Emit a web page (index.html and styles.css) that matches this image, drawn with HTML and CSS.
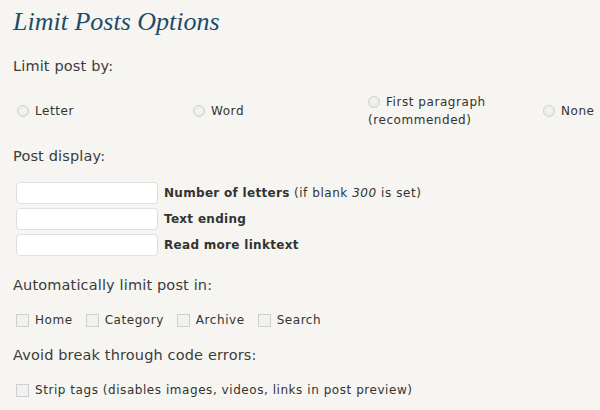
FILE: index.html
```html
<!DOCTYPE html>
<html>
<head>
<meta charset="utf-8">
<link rel="stylesheet" href="styles.css">
</head>
<body>
<div class="wrap">
  <h2 class="title">Limit Posts Options</h2>

  <p class="section">Limit post by:</p>
  <div class="radios">
    <label class="opt"><input type="radio" name="by"><span>Letter</span></label>
    <label class="opt"><input type="radio" name="by"><span>Word</span></label>
    <label class="opt wrapopt"><input type="radio" name="by">First paragraph (recommended)</label>
    <label class="opt"><input type="radio" name="by"><span>None</span></label>
  </div>

  <p class="section s2">Post display:</p>
  <div class="fields">
    <div class="field"><input type="text" class="text"><span class="flabel"><b>Number of letters</b> (if blank <i>300</i> is set)</span></div>
    <div class="field"><input type="text" class="text"><span class="flabel"><b>Text ending</b></span></div>
    <div class="field"><input type="text" class="text"><span class="flabel"><b>Read more linktext</b></span></div>
  </div>

  <p class="section s3">Automatically limit post in:</p>
  <div class="checks">
    <label class="chk"><input type="checkbox"><span>Home</span></label>
    <label class="chk"><input type="checkbox"><span>Category</span></label>
    <label class="chk"><input type="checkbox"><span>Archive</span></label>
    <label class="chk"><input type="checkbox"><span>Search</span></label>
  </div>

  <p class="section s4">Avoid break through code errors:</p>
  <div class="checks last">
    <label class="chk"><input type="checkbox"><span>Strip tags (disables images, videos, links in post preview)</span></label>
  </div>
</div>
</body>
</html>
```

FILE: styles.css
```css
html, body {
  margin: 0;
  padding: 0;
  background: #f6f5f1;
}
.wrap {
  padding: 7px 13px 0 13px;
  font-family: "DejaVu Sans", Verdana, sans-serif;
  color: #333;
}
.title {
  margin: 0;
  font-family: "Liberation Serif", Georgia, serif;
  font-style: italic;
  font-weight: normal;
  font-size: 26px;
  line-height: 30px;
  color: #1d4c6a;
}
.section {
  margin: 19px 0 0 0;
  font-size: 14.5px;
  letter-spacing: 0.15px;
  font-weight: normal;
  line-height: 20px;
  height: 20px;
  color: #3c3c3c;
}
.s2 { margin-top: 17px; }
.s3 { margin-top: 19px; }
.s4 { margin-top: 16px; }
.radios {
  display: grid;
  grid-template-columns: 176px 175px 175px auto;
  align-items: center;
  margin-top: 17px;
  font-size: 12px;
  letter-spacing: 0.55px;
  line-height: 18px;
}
.opt {
  padding-left: 4px;
  display: flex;
  align-items: center;
}
.wrapopt {
  display: block;
  padding-right: 10px;
}
.wrapopt input { vertical-align: -2px; }
input[type=radio] {
  -webkit-appearance: none;
  appearance: none;
  width: 12px;
  height: 12px;
  margin: 0 6px 0 0;
  border: 1px solid #cfcfcf;
  border-radius: 50%;
  background: radial-gradient(circle at 50% 40%, #f4f4f4 0%, #e6e6e6 100%);
  box-sizing: border-box;
}
.fields {
  margin-top: 16px;
  display: flex;
  flex-direction: column;
  gap: 4px;
}
.field {
  display: flex;
  align-items: center;
  font-size: 12px;
  letter-spacing: 0.55px;
}
.text {
  width: 142px;
  height: 22px;
  margin: 0 6px 0 3px;
  box-sizing: border-box;
  border: 1px solid #dfdfdf;
  border-radius: 4px;
  background: #fff;
  padding: 0;
}
.flabel { color: #333; }
.flabel b { color: #333; letter-spacing: 0.3px; }
.checks {
  margin-top: 16px;
  display: flex;
  align-items: center;
  font-size: 12px;
  letter-spacing: 0.55px;
  line-height: 18px;
  height: 18px;
}
.checks.last { margin-top: 16px; }
.chk {
  display: flex;
  align-items: center;
  margin-right: 10px;
}
input[type=checkbox] {
  -webkit-appearance: none;
  appearance: none;
  width: 13px;
  height: 13px;
  margin: 0 6px 0 3px;
  border: 1px solid #cfcfcf;
  background: #f1f1f1;
  box-sizing: border-box;
}
```
